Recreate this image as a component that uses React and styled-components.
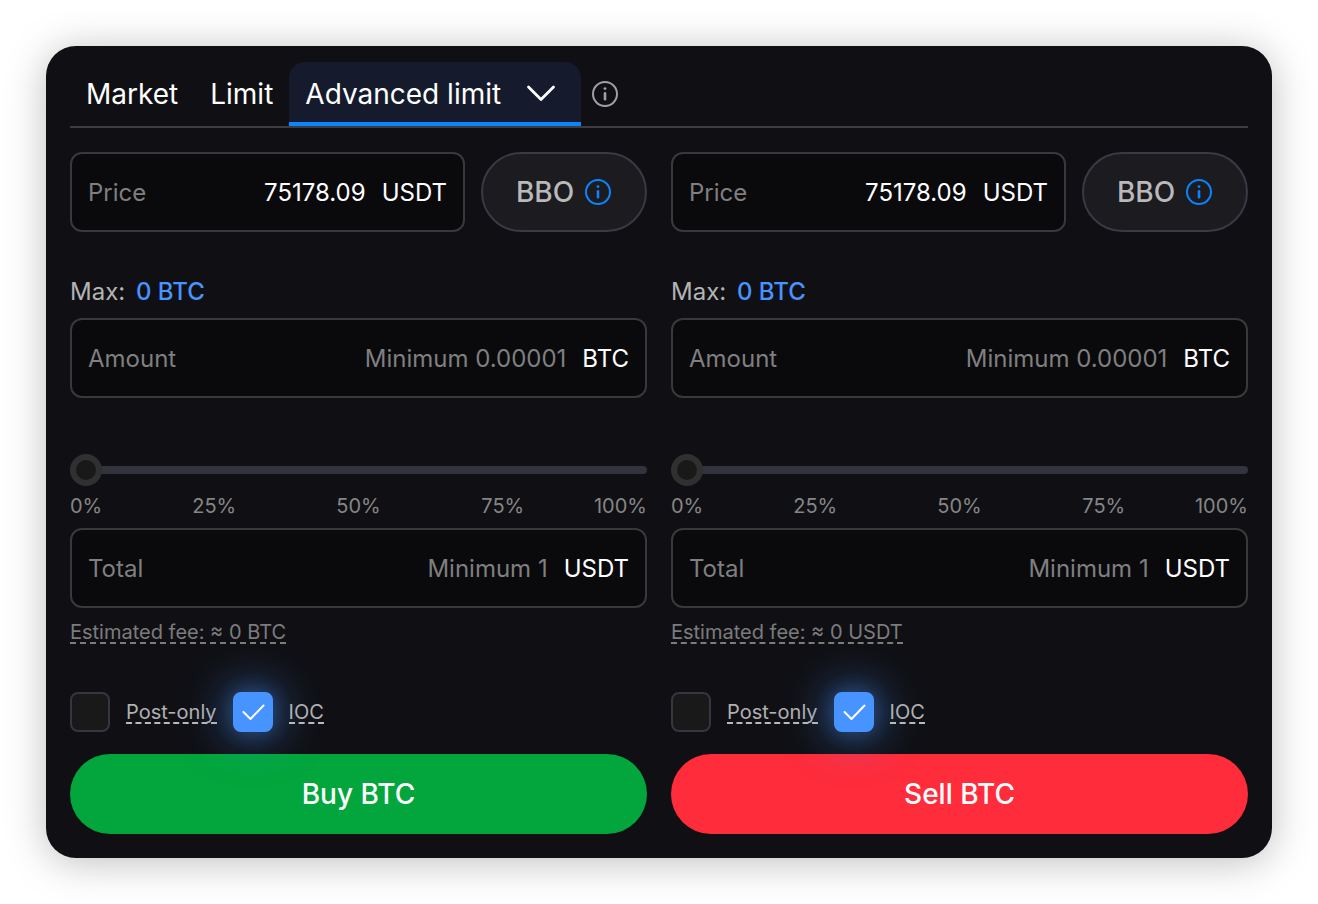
import React, { useState } from "react";
import styled, { createGlobalStyle } from "styled-components";

const InfoIcon = () => (
  <svg width="28" height="28" viewBox="0 0 28 28" fill="none" aria-hidden="true">
    <circle cx="14" cy="14" r="12" stroke="currentColor" strokeWidth="2" />
    <circle cx="14" cy="8.6" r="1.4" fill="currentColor" />
    <path d="M14 13.4v5.8" stroke="currentColor" strokeWidth="2.6" strokeLinecap="round" />
  </svg>
);

const Chevron = () => (
  <svg width="32" height="32" viewBox="0 0 32 32" fill="none" aria-hidden="true">
    <path
      d="M3.5 9 16 21.5 28.5 9"
      stroke="currentColor"
      strokeWidth="2.8"
      strokeLinecap="round"
      strokeLinejoin="round"
    />
  </svg>
);

const Check = () => (
  <svg width="24" height="18" viewBox="0 0 24 18" fill="none" aria-hidden="true">
    <path
      d="M2.5 9l7 7L22.5 2.5"
      stroke="currentColor"
      strokeWidth="2"
      strokeLinecap="round"
      strokeLinejoin="round"
    />
  </svg>
);

const Field = ({ id, label, unit, ...rest }) => (
  <FieldBox>
    <label htmlFor={id}>{label}</label>
    <input id={id} type="text" {...rest} />
    <span>{unit}</span>
  </FieldBox>
);

const Tick = ({ id, label, defaultChecked }) => (
  <TickRow>
    <TickBox>
      <input id={id} type="checkbox" defaultChecked={defaultChecked} />
      <Check />
    </TickBox>
    <TickLabel htmlFor={id}>{label}</TickLabel>
  </TickRow>
);

const OrderForm = ({ side, action, feeUnit, color }) => {
  const [percent, setPercent] = useState(0);

  return (
    <Form onSubmit={(e) => e.preventDefault()}>
      <PriceRow>
        <Field id={`${side}-price`} label="Price" unit="USDT" defaultValue="75178.09" />
        <BboButton type="button">
          BBO
          <InfoIcon />
        </BboButton>
      </PriceRow>
      <MaxLine>
        Max: <b>0 BTC</b>
      </MaxLine>
      <Field id={`${side}-amount`} label="Amount" unit="BTC" placeholder="Minimum 0.00001" />
      <Slider
        type="range"
        min="0"
        max="100"
        aria-label="Percent of balance"
        value={percent}
        onChange={(e) => setPercent(Number(e.target.value))}
      />
      <Scale>
        <span>0%</span>
        <span>25%</span>
        <span>50%</span>
        <span>75%</span>
        <span>100%</span>
      </Scale>
      <Field id={`${side}-total`} label="Total" unit="USDT" placeholder="Minimum 1" />
      <Fee>Estimated fee: ≈ 0 {feeUnit}</Fee>
      <Options>
        <Tick id={`${side}-post`} label="Post-only" />
        <Tick id={`${side}-ioc`} label="IOC" defaultChecked />
      </Options>
      <Submit type="submit" $color={color}>
        {action}
      </Submit>
    </Form>
  );
};

const App = () => {
  return (
    <>
      <GlobalStyle />
      <Panel>
        <Tabs>
          <Tab type="button">Market</Tab>
          <Tab type="button">Limit</Tab>
          <Tab type="button" $active>
            Advanced limit
            <Chevron />
          </Tab>
          <InfoButton type="button" aria-label="Order types">
            <InfoIcon />
          </InfoButton>
        </Tabs>
        <Columns>
          <OrderForm side="buy" action="Buy BTC" feeUnit="BTC" color="#02a63c" />
          <OrderForm side="sell" action="Sell BTC" feeUnit="USDT" color="#ff2c3b" />
        </Columns>
      </Panel>
    </>
  );
};

export default App;

const GlobalStyle = createGlobalStyle`
  * {
    box-sizing: border-box;
  }
  body {
    margin: 0;
    background: #fff;
    font-family: Inter, "Liberation Sans", sans-serif;
  }
  button,
  input {
    font: inherit;
    color: inherit;
    border: 0;
    background: none;
  }
  svg {
    flex: none;
  }
`;

const Panel = styled.main`
  margin: 46px;
  padding: 16px 24px 24px;
  border-radius: 30px;
  background: #101014;
  color: #fff;
  box-shadow: 0 4px 40px rgba(0, 0, 0, 0.26);
`;

const Tabs = styled.nav`
  display: flex;
  border-bottom: 2px solid #3d3d3f;
`;

const Tab = styled.button`
  display: flex;
  align-items: center;
  gap: 24px;
  height: 64px;
  padding: 4px ${(props) => (props.$active ? "24px" : "16px")} 0 16px;
  border-bottom: 4px solid ${(props) => (props.$active ? "#0a84ff" : "transparent")};
  border-radius: 16px 16px 0 0;
  background: ${(props) => (props.$active ? "#151b2c" : "none")};
  background-clip: padding-box;
  font-size: 28px;
  cursor: pointer;
`;

const InfoButton = styled.button`
  display: flex;
  align-items: center;
  padding: 0 10px;
  color: #a09fa6;
`;

const Columns = styled.div`
  display: grid;
  grid-template-columns: 1fr 1fr;
  gap: 24px;
  margin-top: 24px;
`;

const Form = styled.form`
  display: flex;
  flex-direction: column;
  min-width: 0;
`;

const PriceRow = styled.div`
  display: grid;
  grid-template-columns: 1fr 166px;
  gap: 16px;
`;

const FieldBox = styled.div`
  display: flex;
  align-items: center;
  gap: 16px;
  min-width: 0;
  height: 80px;
  padding: 0 16px;
  border: 2px solid #39393b;
  border-radius: 12px;
  background: #0a0a0c;
  font-size: 24px;
  label {
    color: #7f7f80;
  }
  input {
    flex: 1;
    min-width: 0;
    padding: 0;
    text-align: right;
    outline: none;
  }
  input::placeholder {
    color: #7f7f80;
    opacity: 1;
  }
`;

const BboButton = styled.button`
  display: flex;
  align-items: center;
  justify-content: center;
  gap: 10px;
  border: 2px solid #383a44;
  border-radius: 40px;
  background: #1c1b20;
  color: #b9b9ba;
  font-size: 28px;
  font-weight: 500;
  svg {
    color: #0a84ff;
  }
`;

const MaxLine = styled.p`
  margin: 46px 0 12px;
  color: #b4b4b5;
  font-size: 24px;
  line-height: 28px;
  b {
    margin-left: 4px;
    color: #4793ff;
    font-weight: 500;
  }
`;

const Slider = styled.input`
  appearance: none;
  width: 100%;
  height: 32px;
  margin: 56px 0 10px;
  &::-webkit-slider-runnable-track {
    height: 8px;
    border-radius: 4px;
    background: #31343d;
  }
  &::-webkit-slider-thumb {
    appearance: none;
    width: 32px;
    height: 32px;
    margin-top: -12px;
    border: 6px solid #303031;
    border-radius: 50%;
    background: #19191a;
  }
`;

const Scale = styled.div`
  display: grid;
  grid-template-columns: minmax(0, 1fr) repeat(3, minmax(0, 2fr)) minmax(0, 1fr);
  margin-bottom: 12px;
  color: #858586;
  font-size: 20px;
  line-height: 20px;
  text-align: center;
  span:first-child {
    text-align: left;
  }
  span:last-child {
    text-align: right;
  }
`;

const Fee = styled.span`
  align-self: flex-start;
  margin-top: 14px;
  border-bottom: 2px dashed #7c7c7e;
  color: #7c7c7e;
  font-size: 20px;
  line-height: 20px;
`;

const Options = styled.div`
  display: flex;
  gap: 16px;
  margin: 48px 0 22px;
`;

const TickRow = styled.div`
  display: flex;
  align-items: center;
  gap: 16px;
`;

/* z-index lets the glow fall over the submit button below */
const TickBox = styled.span`
  display: grid;
  place-items: center;
  z-index: 1;
  input,
  svg {
    grid-area: 1 / 1;
  }
  input {
    appearance: none;
    width: 40px;
    height: 40px;
    margin: 0;
    border: 2px solid #35363f;
    border-radius: 8px;
    background: #19191a;
  }
  input:checked {
    border-color: #4793ff;
    background: #4793ff;
    box-shadow: 0 0 20px rgba(71, 147, 255, 0.3), 0 0 48px rgba(71, 147, 255, 0.8);
  }
  svg {
    z-index: 1;
    visibility: hidden;
    pointer-events: none;
  }
  input:checked + svg {
    visibility: visible;
  }
`;

const TickLabel = styled.label`
  z-index: 1;
  padding-top: 2px;
  border-bottom: 2px dashed #b9b9ba;
  color: #b0b0b1;
  font-size: 20px;
  line-height: 20px;
`;

const Submit = styled.button`
  height: 80px;
  border-radius: 40px;
  background: ${(props) => props.$color};
  font-size: 28px;
  font-weight: 500;
  cursor: pointer;
`;
